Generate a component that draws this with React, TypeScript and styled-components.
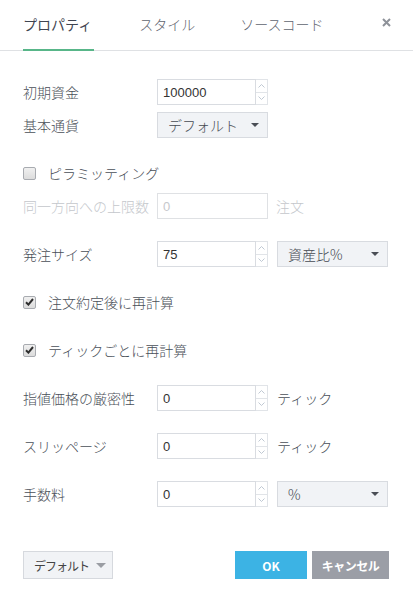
import React from "react";
import styled, { createGlobalStyle, css } from "styled-components";

const GlobalStyle = createGlobalStyle`
  html, body { margin: 0; padding: 0; background: #ffffff; }
  body {
    font-family: "Noto Sans CJK JP", "Noto Sans", sans-serif;
    font-weight: 300;
    -webkit-font-smoothing: antialiased;
  }
  * { box-sizing: border-box; }
`;

const Dialog = styled.div`
  width: 413px;
  height: 601px;
  display: flex;
  flex-direction: column;
  background: #fff;
`;

const Header = styled.div`
  height: 51px;
  display: flex;
  align-items: stretch;
  padding: 0 22px 0 23px;
  border-bottom: 1px solid #dfe1e4;
`;

const Tab = styled.div<{ $active?: boolean }>`
  display: flex;
  align-items: center;
  margin-right: 45px;
  margin-bottom: -1px;
  padding-bottom: 2px;
  font-size: 14px;
  font-weight: ${(p) => (p.$active ? 400 : 300)};
  color: ${(p) => (p.$active ? "#3f4551" : "#5f656f")};
  border-bottom: 2px solid ${(p) => (p.$active ? "#58b689" : "transparent")};
  padding-right: ${(p) => (p.$active ? "2px" : "0")};
  cursor: pointer;
`;

const Close = styled.div`
  margin-left: auto;
  display: flex;
  align-items: center;
  padding-bottom: 5px;
`;

const Body = styled.div`
  padding: 28px 23px 0;
  display: flex;
  flex-direction: column;
  gap: 22px;
`;

const Group = styled.div`
  display: flex;
  flex-direction: column;
  gap: 7px;
`;

const Row = styled.div`
  display: flex;
  align-items: center;
  height: 26px;
`;

const Label = styled.div<{ $disabled?: boolean }>`
  width: 134px;
  font-size: 14px;
  color: ${(p) => (p.$disabled ? "#c4c7cc" : "#4a4f58")};
  white-space: nowrap;
`;

const Unit = styled.div<{ $disabled?: boolean }>`
  margin-left: ${(p) => (p.$disabled ? "8px" : "9px")};
  font-size: 14px;
  color: ${(p) => (p.$disabled ? "#c4c7cc" : "#4a4f58")};
`;

const NumberBox = styled.div`
  display: flex;
  width: 111px;
  height: 26px;
`;

const Field = styled.input<{ $full?: boolean }>`
  width: ${(p) => (p.$full ? "111px" : "99px")};
  height: 26px;
  border: 1px solid #d9dce1;
  padding: 0 0 0 5px;
  margin: 0;
  font-family: "Liberation Sans", Arial, sans-serif;
  font-size: 13px;
  color: #333;
  background: #fff;
  outline: none;
  &:disabled {
    color: #c6c8cc;
    border-color: #dfe1e4;
    background: #fff;
  }
`;

const Spinner = styled.div`
  width: 12px;
  height: 26px;
  display: flex;
  flex-direction: column;
  border: 1px solid #e1e4e8;
  border-left: none;
`;

const SpinHalf = styled.div<{ $top?: boolean }>`
  flex: 1;
  display: flex;
  align-items: center;
  justify-content: center;
  ${(p) =>
    p.$top &&
    css`
      border-bottom: 1px solid #e1e4e8;
    `}
`;

const Select = styled.div<{ $gap?: boolean }>`
  width: 111px;
  height: 26px;
  margin-left: ${(p) => (p.$gap ? "9px" : "0")};
  display: flex;
  align-items: center;
  padding: 0 8px 0 10px;
  background: #f1f3f6;
  border: 1px solid #d8dbe0;
  font-size: 14px;
  color: #454a52;
`;

const SelectText = styled.span`
  flex: 1;
`;

const Caret = styled.span<{ $color?: string; $size?: number }>`
  flex-shrink: 0;
  width: 0;
  height: 0;
  border-left: ${(p) => (p.$size ?? 4)}px solid transparent;
  border-right: ${(p) => (p.$size ?? 4)}px solid transparent;
  border-top: ${(p) => (p.$size ?? 4)}px solid ${(p) => p.$color ?? "#4a4e55"};
`;

const CheckRow = styled.label`
  display: flex;
  align-items: center;
  height: 26px;
  font-size: 14px;
  color: #4a4f58;
`;

const Box = styled.span`
  width: 13px;
  height: 13px;
  border: 1px solid #a8abb0;
  border-radius: 2px;
  background: linear-gradient(#f0f0f0, #dcdcdc);
  display: flex;
  align-items: center;
  justify-content: center;
  margin-right: 12px;
`;

const Footer = styled.div`
  margin-top: 44px;
  padding: 0 24px 0 23px;
  display: flex;
  align-items: center;
`;

const DefaultButton = styled.button`
  width: 90px;
  height: 28px;
  display: flex;
  align-items: center;
  gap: 7px;
  padding: 0 0 0 10px;
  background: #f1f3f6;
  border: 1px solid #d6d9de;
  font-family: "Noto Sans CJK JP", sans-serif;
  font-size: 12px;
  font-weight: 400;
  letter-spacing: -1px;
  white-space: nowrap;
  color: #444;
`;

const ActionButton = styled.button<{ $variant: "primary" | "cancel" }>`
  height: 28px;
  border: none;
  color: #fff;
  font-family: "Noto Sans CJK JP", sans-serif;
  font-size: 12px;
  font-weight: 700;
  white-space: nowrap;
  ${(p) =>
    p.$variant === "primary"
      ? css`
          width: 72px;
          margin-left: auto;
          background: #3cb3e4;
        `
      : css`
          width: 77px;
          margin-left: 5px;
          background: #9b9ea6;
          letter-spacing: -0.5px;
        `}
`;

const Chevron = ({ up }: { up?: boolean }) => (
  <svg width="7" height="4" viewBox="0 0 7 4">
    <path
      d={up ? "M0.5 3.5 L3.5 0.5 L6.5 3.5" : "M0.5 0.5 L3.5 3.5 L6.5 0.5"}
      fill="none"
      stroke="#b9c3ce"
      strokeWidth="0.9"
    />
  </svg>
);

const NumberInput = ({ value }: { value: string }) => (
  <NumberBox>
    <Field defaultValue={value} />
    <Spinner>
      <SpinHalf $top>
        <Chevron up />
      </SpinHalf>
      <SpinHalf>
        <Chevron />
      </SpinHalf>
    </Spinner>
  </NumberBox>
);

const Checkbox = ({ checked, label }: { checked?: boolean; label: string }) => (
  <CheckRow>
    <Box>
      {checked && (
        <svg width="9" height="8" viewBox="0 0 9 8">
          <path d="M1 4.2 L3.4 6.6 L8 1" fill="none" stroke="#2e2e2e" strokeWidth="2" />
        </svg>
      )}
    </Box>
    {label}
  </CheckRow>
);

export default function App() {
  return (
    <>
      <GlobalStyle />
      <Dialog>
        <Header>
          <Tab $active>プロパティ</Tab>
          <Tab>スタイル</Tab>
          <Tab>ソースコード</Tab>
          <Close>
            <svg width="9" height="9" viewBox="0 0 9 9">
              <path d="M1 1 L8 8 M8 1 L1 8" stroke="#8e9299" strokeWidth="2" />
            </svg>
          </Close>
        </Header>
        <Body>
          <Group>
            <Row>
              <Label>初期資金</Label>
              <NumberInput value="100000" />
            </Row>
            <Row>
              <Label>基本通貨</Label>
              <Select>
                <SelectText>デフォルト</SelectText>
                <Caret />
              </Select>
            </Row>
          </Group>
          <Group>
            <Checkbox label="ピラミッティング" />
            <Row>
              <Label $disabled>同一方向への上限数</Label>
              <Field $full disabled defaultValue="0" />
              <Unit $disabled>注文</Unit>
            </Row>
          </Group>
          <Row>
            <Label>発注サイズ</Label>
            <NumberInput value="75" />
            <Select $gap>
              <SelectText>資産比%</SelectText>
              <Caret />
            </Select>
          </Row>
          <Checkbox checked label="注文約定後に再計算" />
          <Checkbox checked label="ティックごとに再計算" />
          <Row>
            <Label>指値価格の厳密性</Label>
            <NumberInput value="0" />
            <Unit>ティック</Unit>
          </Row>
          <Row>
            <Label>スリッページ</Label>
            <NumberInput value="0" />
            <Unit>ティック</Unit>
          </Row>
          <Row>
            <Label>手数料</Label>
            <NumberInput value="0" />
            <Select $gap>
              <SelectText>%</SelectText>
              <Caret />
            </Select>
          </Row>
        </Body>
        <Footer>
          <DefaultButton>
            デフォルト
            <Caret $color="#9a9da3" $size={5} />
          </DefaultButton>
          <ActionButton $variant="primary">OK</ActionButton>
          <ActionButton $variant="cancel">キャンセル</ActionButton>
        </Footer>
      </Dialog>
    </>
  );
}
